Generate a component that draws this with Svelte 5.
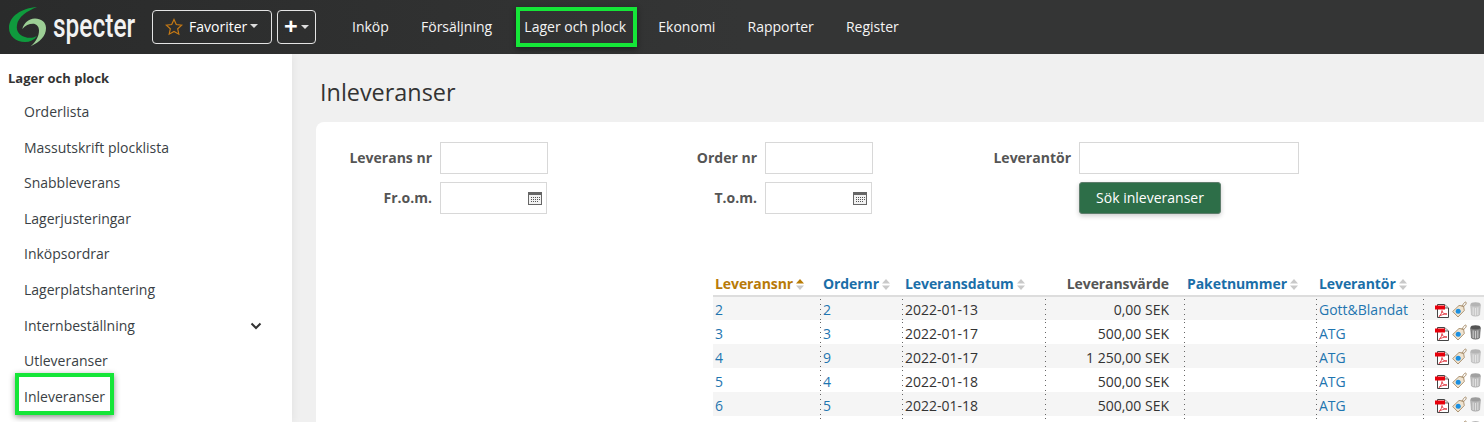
<script>
  const sideItems = ['Orderlista','Massutskrift plocklista','Snabbleverans','Lagerjusteringar','Inköpsordrar','Lagerplatshantering','Internbeställning','Utleveranser','Inleveranser'];
  const nav = ['Inköp','Försäljning','Lager och plock','Ekonomi','Rapporter','Register'];
  const rows = [
    ['2','2','2022-01-13','0,00 SEK','Gott&Blandat','off'],
    ['3','3','2022-01-17','500,00 SEK','ATG','on'],
    ['4','9','2022-01-17','1 250,00 SEK','ATG','off'],
    ['5','4','2022-01-18','500,00 SEK','ATG','mid'],
    ['6','5','2022-01-18','500,00 SEK','ATG','mid'],
    ['','','','','','mid']
  ];
</script>

<header class="top">
  <a class="brand" href="#top">
    <svg width="40" height="42" viewBox="0 0 40 42" aria-hidden="true">
      <path d="M29 1C14 2 1 10 1 22C1 30 8 36 17 36C22 36 26 34 29 30C25 32 21 32.500 17 31C11 29 8 25 9 19C10 11 19 5 29 1Z" fill="#0f9a3d"/>
      <path d="M14.300 23C16 17 20 13 27 12.500C33 12.500 38 16 38 22C38 30 32 36 22.700 40.300C28 36 31 30 31 24.500C31 20 28 17.700 25 17.700C21 17.700 17 19.500 14.300 23Z" fill="#9ccf95"/>
    </svg>
    <span class="word">specter</span>
  </a>
  <button class="tb fav">
    <svg width="18" height="18" viewBox="0 0 18 18" aria-hidden="true"><path d="M9 1.500l2.300 5 5.400.6-4 3.700 1.100 5.400L9 13.500l-4.800 2.700 1.100-5.400-4-3.700 5.400-.6z" fill="none" stroke="#c77a14" stroke-width="1.200"/></svg>
    <span>Favoriter</span><i class="caret"></i>
  </button>
  <button class="tb plus"><b>+</b><i class="caret"></i></button>
  <nav class="nav">
    {#each nav as n}
      <a href="#top" class:mark={n === 'Lager och plock'}>{n}</a>
    {/each}
  </nav>
</header>

<div class="page">
  <aside class="side">
    <h2>Lager och plock</h2>
    <ul>
      {#each sideItems as s}
        <li class:mark={s === 'Inleveranser'}>
          <span>{s}</span>
          {#if s === 'Internbeställning'}
            <svg width="12" height="8" viewBox="0 0 12 8" aria-hidden="true"><path d="M1.500 1.500L6 6l4.500-4.500" fill="none" stroke="#333" stroke-width="2"/></svg>
          {/if}
        </li>
      {/each}
    </ul>
  </aside>

  <main class="main">
    <h1>Inleveranser</h1>
    <section class="card">
      <form class="search">
        <label for="a">Leverans nr</label><input id="a" />
        <label for="b">Order nr</label><input id="b" />
        <label for="c">Leverantör</label><input id="c" />
        <label for="d">Fr.o.m.</label>
        <div class="date"><input id="d" />{@render cal()}</div>
        <label for="e">T.o.m.</label>
        <div class="date"><input id="e" />{@render cal()}</div>
        <span></span>
        <button type="button" class="go">Sök inleveranser</button>
      </form>

      <table>
        <colgroup>
          <col class="c1"/><col class="c2"/><col class="c3"/><col class="c4"/><col class="c5"/><col class="c6"/><col/>
        </colgroup>
        <thead>
          <tr>
            <th class="active">Leveransnr{@render sort(true)}</th>
            <th>Ordernr{@render sort(false)}</th>
            <th>Leveransdatum{@render sort(false)}</th>
            <th class="plain">Leveransvärde</th>
            <th>Paketnummer{@render sort(false)}</th>
            <th>Leverantör{@render sort(false)}</th>
            <th></th>
          </tr>
        </thead>
        <tbody>
          {#each rows as r}
            <tr>
              <td><a href="#top">{r[0]}</a></td>
              <td class="d"><a href="#top">{r[1]}</a></td>
              <td class="d">{r[2]}</td>
              <td class="d num">{r[3]}</td>
              <td class="d"></td>
              <td class="d"><a href="#top">{r[4]}</a></td>
              <td class="d acts">
                <svg class="ic pdf" width="14" height="14" viewBox="0 0 14 14" aria-hidden="true">
                  <path d="M2.500.5h7l4 3.500v9.500h-11z" fill="#fff" stroke="#444"/>
                  <path d="M9.500.5v3.500h4" fill="#ddd" stroke="#444" stroke-width=".8"/>
                  <rect x="0" y="1.500" width="10" height="4" fill="#e8000b"/>
                  <path d="M4 12.500c2-2 3-4 3-6 0 2.500 2 3.500 5 3.500-3 0-6 .8-8 2.500z" fill="none" stroke="#e0303a" stroke-width=".9"/>
                </svg>
                <svg class="ic tag" width="15" height="17" viewBox="0 0 15 17" aria-hidden="true">
                  <path d="M.7 10.500L7 4.500l4.500.5.8 4.500-6.300 6.500z" fill="#efe3d0" stroke="#a58a66" stroke-width=".9"/>
                  <circle cx="6.200" cy="10.200" r="2.500" fill="#1b8fe0"/>
                  <path d="M10 6C11 2.500 13 .5 14 1.200c.8.8-.3 3-2.500 4.300" fill="none" stroke="#a58a66" stroke-width=".9"/>
                </svg>
                <svg class="ic bin {r[5]}" width="11" height="15" viewBox="0 0 11 15" aria-hidden="true">
                  <ellipse cx="5.500" cy="2.500" rx="5" ry="2.200" fill="#555"/>
                  <path d="M.6 3l.9 10c1 1.500 7 1.500 8 0l.9-10c-2 1.800-7.800 1.800-9.800 0z" fill="#888" stroke="#555" stroke-width=".6"/>
                  <path d="M3.200 5.500v7.500M5.500 6v7.500M7.800 5.500v7.500" stroke="#ddd" stroke-width=".8"/>
                </svg>
              </td>
            </tr>
          {/each}
        </tbody>
      </table>
    </section>
  </main>
</div>

{#snippet cal()}
  <svg class="cal" width="14" height="13" viewBox="0 0 14 13" aria-hidden="true">
    <rect x=".5" y=".5" width="13" height="12" fill="#f2f2f2" stroke="#666"/>
    <rect x="1" y="1" width="12" height="2" fill="#666"/>
    <path d="M3 5.500h1M5 5.500h1M7 5.500h1M9 5.500h1M11 5.500h1M3 7.500h1M5 7.500h1M7 7.500h1M9 7.500h1M11 7.500h1M3 9.500h1M5 9.500h1M7 9.500h1M9 9.500h1" stroke="#555"/>
  </svg>
{/snippet}

{#snippet sort(active)}
  <svg class="sort" width="8" height="11" viewBox="0 0 8 11" aria-hidden="true">
    <path d="M4 0l4 4.500H0z" fill={active ? '#b97c05' : '#c9c9c9'}/>
    <path d="M4 11l4-4.500H0z" fill="#c9c9c9"/>
  </svg>
{/snippet}

<style>
  :global(html), :global(body) { margin: 0; height: 422px; overflow: hidden; }
  :global(body) { font: 14px/20px "Open Sans", sans-serif; color: #333; background: #f0f0f0; }
  a { color: inherit; text-decoration: none; }

  .top { height: 54px; display: flex; align-items: center; padding-left: 8px; box-sizing: border-box;
    background: linear-gradient(90deg, #2a2b2b, #343535 50%); color: #fff; }
  .brand { display: flex; align-items: center; width: 144px; height: 54px; flex: none; }
  .brand svg { flex: none; }
  .word { margin: -5px 0 0 5px; font: 500 34px/1 "Roboto", sans-serif; color: #f2f2f2; display: inline-block; transform: scaleX(.72); transform-origin: left center; }
  .tb { height: 34px; box-sizing: border-box; display: flex; align-items: center; background: transparent; color: #fff;
    border: 1px solid #e4e4e4; border-radius: 4px; font: 14px "Open Sans", sans-serif; padding: 0; flex: none; }
  .fav { width: 120px; padding: 0 0 2px 12px; gap: 6px; }
  .fav svg { flex: none; margin-top: 2px; }
  .plus { width: 39px; margin-left: 5px; padding-left: 6px; gap: 3px; }
  .plus b { font: 700 24px/1 "Open Sans", sans-serif; margin-top: -3px; }
  .caret { width: 0; height: 0; border: 4px solid transparent; border-top-color: #ddd; border-bottom: 0; }
  .fav .caret { margin-left: -3px; }
  .nav { display: flex; gap: 32.15px; margin-left: 36px; }
  .nav a { color: #f4f4f4; }
  .mark { position: relative; }
  .mark::after { content: ""; position: absolute; box-sizing: border-box; border: 4px solid #15e638;
    box-shadow: 0 2px 6px rgba(0,0,0,.45); pointer-events: none; }
  .nav .mark::after { left: -8px; right: -11px; top: -10px; bottom: -10px; }
  .side li.mark::after { left: -9px; top: -6px; width: 99px; height: 42px; }

  .page { display: flex; align-items: stretch; height: 368px; overflow: hidden; }
  .side { width: 292px; flex: none; background: #fff; box-sizing: border-box; padding: 14px 0 0 8px; box-shadow: 2px 0 8px rgba(0,0,0,.05); z-index: 1; }
  .side h2 { margin: 0 0 6.3px; font: 700 13px/20px "Open Sans", sans-serif; color: #333; }
  .side ul { list-style: none; margin: 0; padding: 0 0 0 16px; }
  .side li { height: 35.6px; display: flex; align-items: center; justify-content: space-between; width: 238px; color: #3a3f45; }

  .main { flex: 1; min-width: 0; padding-left: 24px; }
  h1 { margin: 0; padding: 23px 0 0 4px; height: 45px; font: 400 23.4px/30px "Open Sans", sans-serif; color: #333; }
  .card { background: #fff; border-radius: 8px 0 0 0; padding: 20px 0 0 24px; height: 300px; box-sizing: border-box; overflow: hidden; }

  .search { display: grid; grid-template-columns: 92px 108px 201px 108px 190px 220px; column-gap: 8px; row-gap: 8px; align-items: center; height: 72px; }
  .search label { text-align: right; font-weight: 700; color: #555; }
  input { box-sizing: border-box; width: 100%; height: 32px; border: 1px solid #d8d8d8; background: #fff; margin: 0; padding: 0; display: block; outline: none; }
  .date { position: relative; width: 107px; }
  .cal { position: absolute; right: 5px; top: 10px; }
  .go { width: 142px; height: 32px; justify-self: start; box-sizing: border-box; background: #2d6e48; border: 1px solid #5e7d6c; border-radius: 3px;
    color: #fff; font: 14px "Open Sans", sans-serif; padding: 0 0 2px; box-shadow: 0 2px 5px rgba(0,0,0,.2); }

  table { margin: 59px 0 0 373px; width: 771px; border-collapse: collapse; table-layout: fixed; }
  .c1 { width: 107px; } .c2 { width: 82px; } .c3 { width: 143px; } .c4 { width: 139px; } .c5 { width: 132px; } .c6 { width: 107px; }
  th { height: 23px; padding: 0 0 0 3px; font-weight: 700; letter-spacing: -.08px; text-align: left; color: #1a6ea8; border-bottom: 2px solid #ddd; white-space: nowrap; box-sizing: border-box; }
  th:first-child, td:first-child { padding-left: 2px; }
  th.active { color: #b87a08; }
  th.plain { color: #555; text-align: right; padding-right: 15px; }
  .sort { margin-left: 3px; vertical-align: -1px; }
  td { height: 24px; padding: 3px 0 0 3px; box-sizing: border-box; white-space: nowrap; color: #333; overflow: hidden; }
  td a { color: #1f75b0; }
  tbody tr:nth-child(odd) { background: #f5f5f5; }
  td.d { background: repeating-linear-gradient(#666 0 1px, transparent 1px 5px) left 2px / 1px 100% no-repeat; }
  .num { text-align: right; padding-right: 15px; }
  td.acts { padding: 0 0 0 12px; font-size: 0; line-height: 0; }
  .ic { vertical-align: top; }
  .pdf { margin: 4px 3px 0 0; }
  .tag { margin: 1px 3px 0 0; }
  .bin { margin-top: 2px; }
  .bin.off { opacity: .4; }
  .bin.mid { opacity: .55; }
</style>
